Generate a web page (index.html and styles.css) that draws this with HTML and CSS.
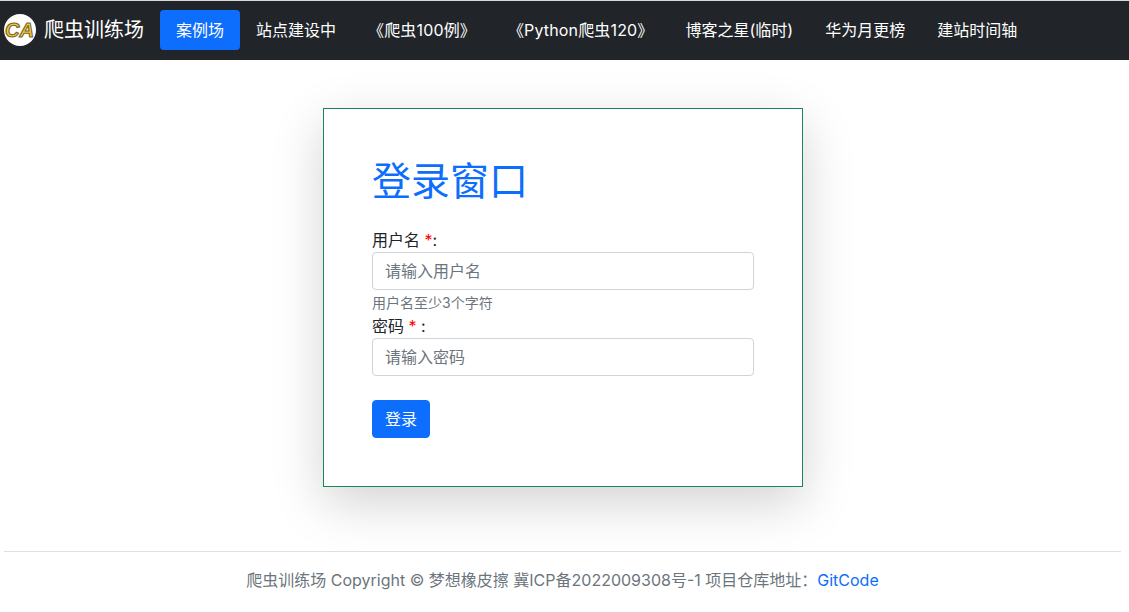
FILE: index.html
```html
<!DOCTYPE html>
<html lang="zh-CN">
<head>
<meta charset="utf-8">
<title>爬虫训练场</title>
<link rel="stylesheet" href="styles.css">
</head>
<body>
<header class="navbar">
  <a class="brand" href="#">
    <svg class="logo" viewBox="0 0 32 32" width="32" height="32" aria-hidden="true">
      <circle cx="16" cy="16" r="16" fill="#fff"/>
      <text x="15.5" y="23" text-anchor="middle" class="logo-text">CA</text>
    </svg>
    <span>爬虫训练场</span>
  </a>
  <nav class="nav">
    <a class="nav-link active" href="#">案例场</a>
    <a class="nav-link" href="#">站点建设中</a>
    <a class="nav-link nav-link-wide" href="#">《爬虫100例》</a>
    <a class="nav-link nav-link-wide" href="#">《Python爬虫120》</a>
    <a class="nav-link" href="#">博客之星(临时)</a>
    <a class="nav-link" href="#">华为月更榜</a>
    <a class="nav-link" href="#">建站时间轴</a>
  </nav>
</header>
<main class="main">
  <form class="card">
    <h1 class="title">登录窗口</h1>
    <label class="label">用户名 <span class="req">*</span>:</label>
    <input class="input" type="text" placeholder="请输入用户名">
    <small class="hint">用户名至少3个字符</small>
    <label class="label">密码 <span class="req">*</span> :</label>
    <input class="input" type="password" placeholder="请输入密码">
    <button class="btn" type="button">登录</button>
  </form>
</main>
<footer class="footer">
  <hr class="rule">
  <p class="copy">爬虫训练场 Copyright © 梦想橡皮擦 冀ICP备2022009308号-1 项目仓库地址：<a href="#">GitCode</a></p>
</footer>
</body>
</html>
```
FILE: styles.css
```css
* { box-sizing: border-box; }
html, body { margin: 0; }
body {
  font-family: "Inter", "Noto Sans CJK SC", sans-serif;
  font-size: 16px;
  line-height: 1.5;
  color: #212529;
  background: #fff;
}
a { text-decoration: none; }
.navbar {
  display: flex;
  align-items: flex-start;
  height: 60px;
  padding: 9px 4px 0;
  background: #212529;
  border-top: 1px solid #d8d8d8;
}
.brand {
  display: flex;
  align-items: center;
  gap: 8px;
  height: 40px;
  margin-right: 16px;
  font-size: 20px;
  color: #fff;
}
.logo { display: block; flex: none; }
.logo-text {
  font-family: "Liberation Sans", sans-serif;
  font-size: 20px;
  font-weight: 700;
  font-style: italic;
  fill: #f7cf2e;
  stroke: #7a6230;
  stroke-width: 1.1px;
}
.nav { display: flex; }
.nav-link {
  display: block;
  padding: 8px 16px;
  color: #fff;
  border-radius: 4px;
}
.nav-link-wide { letter-spacing: .15px; }
.nav-link.active { background: #0d6efd; }
.main {
  display: flex;
  justify-content: center;
  padding: 48px 3px 0 0;
}
.card {
  display: flex;
  flex-direction: column;
  align-items: flex-start;
  width: 480px;
  height: 379px;
  padding: 48px;
  background: #fff;
  border: 1px solid #198754;
  box-shadow: 0 16px 48px rgba(0, 0, 0, .175);
}
.title {
  flex: none;
  margin: 0 0 8px;
  font-size: 39px;
  font-weight: 400;
  line-height: 48px;
  height: 63px;
  color: #0d6efd;
}
.label { display: block; flex: none; height: 24px; }
.req { color: #f00; }
.input {
  display: block;
  flex: none;
  width: 100%;
  height: 38px;
  padding: 6px 12px;
  font: inherit;
  color: #212529;
  background: #fff;
  border: 1px solid #ced4da;
  border-radius: 4px;
}
.input::placeholder { color: #6c757d; opacity: 1; }
.hint { display: block; flex: none; height: 24px; font-size: 14px; color: #6c757d; line-height: 26px; }
.btn {
  display: block;
  flex: none;
  margin-top: 24px;
  height: 38px;
  padding: 6px 12px;
  font: inherit;
  color: #fff;
  background: #0d6efd;
  border: 1px solid #0d6efd;
  border-radius: 4px;
}
.footer { padding: 0 8px 0 4px; margin-top: 64px; }
.rule { margin: 0; border: 0; border-top: 1px solid #dfe0e1; }
.copy { margin: 16px 0 0; text-align: center; color: #6c757d; }
.copy a { color: #0d6efd; }
```
